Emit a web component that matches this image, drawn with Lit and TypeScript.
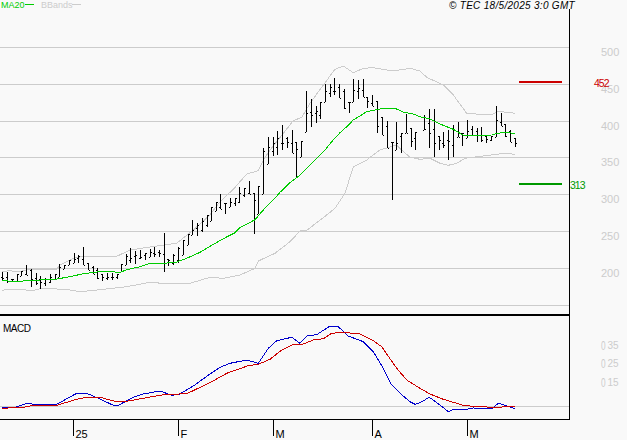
import { LitElement, html, css, svg } from "lit";
import { customElement } from "lit/decorators.js";

type P = number[];
// All series are written as [x, y] pairs measured at 3x, with an origin per region.
const pts = (xo: number, yo: number, a: P[]) => a.map(([x, y]) => [xo + x / 3, yo + y / 3]);
const str = (a: P[]) => a.map(([x, y]) => `${x.toFixed(1)},${y.toFixed(1)}`).join(" ");

const ma20 = [
  ...pts(0, 150, [[5,392],[40,394],[70,393],[100,391],[165,388],[210,380],[250,371],[290,366],[330,365],[360,367],[385,358],[420,350],[445,342],[480,341],[530,336],[560,325],[600,307],[630,289]]),
  ...pts(210, 150, [[40,266],[75,248],[90,233],[135,209],[160,180],[190,150],[210,127],[240,98],[270,75],[310,35],[345,0]]),
  ...pts(210, 0, [[365,425],[390,398],[410,380],[430,360],[470,335],[510,327],[555,325],[580,336],[610,342],[630,350]]),
  ...pts(420, 0, [[30,357],[60,372],[100,388],[130,406],[190,406],[215,405],[230,400],[260,397],[285,401]]),
];
const upper = [
  ...pts(0, 150, [[5,365],[30,362],[50,366],[90,358],[170,358],[180,345],[220,325],[250,319],[350,319],[390,300],[470,288],[530,280],[580,240],[630,195]]),
  ...pts(210, 150, [[30,155],[70,118],[110,72],[145,62],[160,30],[180,0]]),
  ...pts(210, 0, [[250,362],[275,352],[300,310],[340,255],[375,208],[400,198],[430,218],[460,205],[490,203],[550,213],[600,205],[630,213]]),
  ...pts(420, 0, [[20,232],[70,255],[100,285],[140,340],[180,343],[220,342],[235,334],[285,340]]),
];
const lower = [
  ...pts(0, 150, [[5,421],[30,418],[100,421],[130,414],[210,420],[240,425],[290,420],[380,410],[450,397],[500,401],[570,400],[630,382]]),
  ...pts(210, 150, [[40,385],[90,375],[135,355],[145,333],[195,310],[240,275],[270,243],[290,241],[340,203],[375,175],[405,130],[430,50],[470,30],[510,0],[560,-15],[575,0],[600,22],[630,28]]),
  ...pts(420, 150, [[30,25],[60,40],[85,46],[110,40],[135,25],[190,18],[230,13],[260,9],[285,14]]),
];
const macd = [
  ...pts(0, 300, [[5,323],[45,322],[80,310],[110,314],[145,313],[170,313],[230,280],[260,280],[300,297],[340,316],[355,316],[400,292],[430,282],[480,273],[515,286],[540,282],[580,258],[630,222]]),
  ...pts(210, 300, [[30,202],[60,190],[110,180],[145,190],[175,145],[200,122],[245,112],[270,130],[290,108],[320,104],[360,78],[385,80],[415,108],[460,125],[490,155],[520,205],[545,255],[570,280],[600,305],[615,313],[630,308]]),
  ...pts(420, 300, [[28,292],[60,315],[85,335],[100,328],[130,330],[160,324],[215,327],[235,310],[255,316],[285,326]]),
];
const signal = [
  ...pts(0, 300, [[5,325],[70,322],[100,316],[170,316],[230,298],[260,292],[300,292],[345,304],[380,304],[430,295],[490,284],[560,281],[630,248]]),
  ...pts(210, 300, [[50,220],[115,197],[145,193],[180,178],[215,150],[250,133],[280,132],[310,120],[340,116],[365,100],[400,97],[450,102],[490,122],[515,140],[560,205],[590,240],[630,265]]),
  ...pts(420, 300, [[30,282],[70,298],[130,316],[170,320],[230,322],[285,319]]),
];

const rawBars: [number, number, P[]][] = [
  [0, 150, [[7,366,392],[22,366,398],[37,388,397],[52,372,392],[65,364,378],[80,345,374],[95,357,410],[110,370,406],[122,378,416],[137,383,408],[152,372,398],[165,372,388],[179,342,382],[193,345,356],[208,330,345],[222,310,338],[236,315,340],[250,291,345],[265,338,360],[279,348,372],[293,355,386],[308,372,392],[322,370,390],[336,370,390],[351,372,388],[365,342,365],[380,312,345],[392,295,340],[407,304,342],[421,300,326],[436,308,330],[450,296,322],[464,292,320],[478,300,320],[494,250,365],[506,328,348],[521,312,345],[536,290,340],[550,270,315],[564,252,285],[578,210,255],[593,220,258],[607,205,245],[621,196,232]]],
  [210, 0, [[5,620,662],[20,605,632],[31,582,626],[46,608,642],[61,595,620],[76,593,618],[89,562,608],[104,565,590],[119,543,582],[134,578,702],[146,558,642],[160,445,582],[175,412,492],[189,412,468],[203,393,465],[217,376,450],[232,412,445],[247,390,458],[260,425,530],[275,422,472],[289,273,395],[304,297,380],[318,318,368],[332,305,358],[346,253,307],[361,253,292],[374,235,285],[389,253,295],[403,268,328],[418,305,338],[431,238,305],[446,240,298],[461,238,290],[473,290,325],[487,285,318],[502,303,398],[517,352,405],[531,362,445],[546,425,600],[560,367,450],[574,400,460],[588,342,400],[603,385,442],[617,395,450]]],
  [420, 0, [[14,345,390],[28,328,445],[43,328,470],[57,408,450],[71,397,445],[85,390,480],[100,375,470],[114,367,410],[128,400,437],[142,360,415],[157,378,405],[171,383,425],[185,382,425],[199,408,430],[214,407,422],[229,318,410],[243,340,378],[256,372,410],[271,390,425],[285,415,440]]],
];
const bars = rawBars.flatMap(([xo, yo, list]) =>
  list.map(([x, t, b]) => ({ x: Math.floor(xo + x / 3), t: Math.round(yo + t / 3), b: Math.round(yo + b / 3) }))
);
const clamp = (v: number, a: number, z: number) => Math.min(z, Math.max(a, v));
const mid = (b: { t: number; b: number }) => Math.round((b.t + b.b) / 2);

const gridY = [47, 84, 121, 157, 194, 231, 268, 305];
const axis: [number, string][] = [[52, "500"], [89, "450"], [126, "400"], [162, "350"], [199, "300"], [236, "250"], [273, "200"]];
const ticks: [number, string][] = [[73, "25"], [178, "F"], [273, "M"], [372, "A"], [467, "M"]];
const macdAxis: [number, string][] = [[345, "35"], [363, "25"], [382, "15"]];

@customElement("app-root")
export class AppRoot extends LitElement {
  static styles = css`
    :host { display: block; width: 627px; height: 440px; background: #f9f9f9; overflow: hidden; }
    svg { display: block; }
    text { font-family: "Liberation Sans", Arial, sans-serif; font-size: 10px; dominant-baseline: central; }
    .crisp { shape-rendering: crispEdges; }
    .grid { stroke: #cccccc; stroke-width: 1; }
    .ink { stroke: #000; stroke-width: 1; }
    .ink2 { stroke: #000; stroke-width: 2; }
    .band { fill: none; stroke: #cccccc; stroke-width: 1; }
    .ma { fill: none; stroke: #00cc00; stroke-width: 1; }
    .macd { fill: none; stroke: #0000cc; stroke-width: 1; }
    .sig { fill: none; stroke: #cc0000; stroke-width: 1; }
    .legend { font-size: 9px; }
    .g-text { fill: #00cc00; }
    .l-text { fill: #cccccc; }
    .k-text { fill: #000; }
    .axis { fill: #cccccc; font-size: 11px; }
    .axis-small { fill: #cccccc; font-size: 10px; }
    .axis-zero { fill: #cccccc; font-size: 12px; }
    .copy { fill: #000; font-size: 10px; font-style: italic; letter-spacing: 0.3px; }
    .date { fill: #000; font-size: 11px; }
    .res { fill: #cc0000; font-size: 10.5px; }
    .sup { fill: #009900; font-size: 10.5px; }
    .res-bar { stroke: #cc0000; stroke-width: 2; }
    .sup-bar { stroke: #009900; stroke-width: 2; }
  `;

  render() {
    return html`<svg width="627" height="440" viewBox="0 0 627 440">
      <g class="crisp">
        ${gridY.map((y) => svg`<line class="grid" x1="0" x2="569" y1=${y + 0.5} y2=${y + 0.5}></line>`)}
        <line class="grid" x1="0" x2="569" y1="406.5" y2="406.5"></line>
        <polyline class="band" points=${str(upper)}></polyline>
        <polyline class="band" points=${str(lower)}></polyline>
        ${bars.map((b, i) => {
          const prev = bars[i - 1] ?? b;
          const next = bars[i + 1] ?? b;
          const o = clamp(mid(prev), b.t, b.b);
          const c = clamp(mid(next), b.t, b.b);
          return svg`
            <line class="ink" x1=${b.x + 0.5} x2=${b.x + 0.5} y1=${b.t} y2=${b.b}></line>
            <line class="ink" x1=${b.x - 1} x2=${b.x} y1=${o + 0.5} y2=${o + 0.5}></line>
            <line class="ink" x1=${b.x + 1} x2=${b.x + 2} y1=${c + 0.5} y2=${c + 0.5}></line>`;
        })}
        <polyline class="ma" points=${str(ma20)}></polyline>
        <polyline class="macd" points=${str(macd)}></polyline>
        <polyline class="sig" points=${str(signal)}></polyline>

        <line class="ink" x1="569.5" x2="569.5" y1="9" y2="420"></line>
        <line class="ink2" x1="0" x2="570" y1="315" y2="315"></line>
        <line class="ink" x1="0" x2="570" y1="419.5" y2="419.5"></line>
        ${ticks.map(([x]) => svg`<line class="ink" x1=${x + 0.5} x2=${x + 0.5} y1="420" y2="436"></line>`)}

        <line class="ma" x1="25" x2="34" y1="4.5" y2="4.5"></line>
        <line class="band" x1="72" x2="81" y1="4.5" y2="4.5"></line>
        <line class="res-bar" x1="519" x2="562" y1="82" y2="82"></line>
        <line class="sup-bar" x1="519" x2="562" y1="184" y2="184"></line>
      </g>

      <text class="legend g-text" x="1" y="5">MA20</text>
      <text class="legend l-text" x="41" y="5">BBands</text>
      <text class="copy" x="449" y="5">© TEC 18/5/2025 3:0 GMT</text>
      <text class="k-text" x="3" y="328" textLength="28">MACD</text>

      ${axis.map(([y, t]) => svg`<text class="axis" x="601" y=${y}>${t}</text>`)}
      ${macdAxis.map(([y, t]) => svg`
        <text class="axis-zero" x="601" y=${y + 1} textLength="4.6" lengthAdjust="spacingAndGlyphs">0</text>
        <text class="axis-small" x="607.5" y=${y}>${t}</text>`)}
      ${ticks.map(([x, t]) => svg`<text class="date" x=${x + 2.5} y="434">${t}</text>`)}

      <text class="res" x="594" y="83" textLength="15.5">452</text>
      <text class="sup" x="570" y="185" textLength="15.5">313</text>
    </svg>`;
  }
}
